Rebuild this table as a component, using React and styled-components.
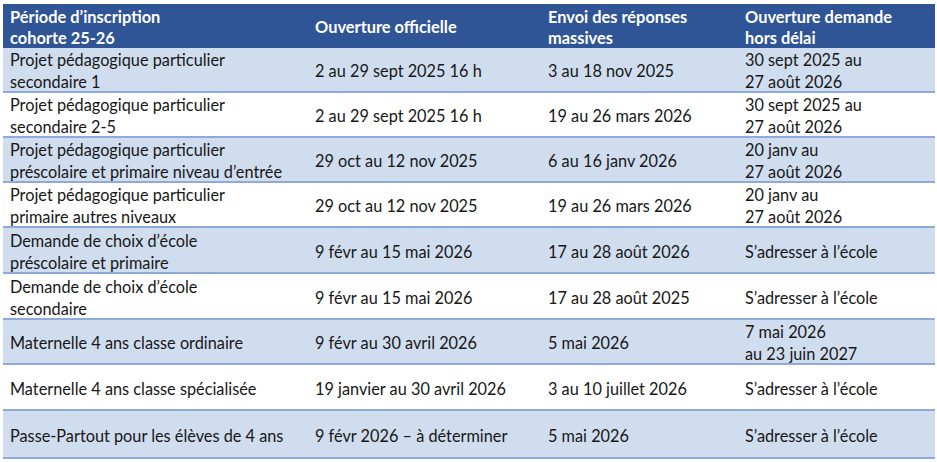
import React from 'react';
import styled, { createGlobalStyle } from 'styled-components';

const GlobalStyle = createGlobalStyle`
  html, body {
    margin: 0;
    padding: 0;
    background: #ffffff;
  }
  body {
    font-family: Lato, 'Liberation Sans', sans-serif;
  }
`;

const Page = styled.div`
  padding: 4px 2px 0 3px;
`;

const Table = styled.div`
  width: 932px;
  display: grid;
  grid-template-columns: 305px 233px 197px 197px;
`;

const HeaderCell = styled.div`
  background: #2f5597;
  color: #ffffff;
  font-weight: 700;
  font-size: 16.4px;
  line-height: 21px;
  height: 44px;
  padding: 1px 6px 0 7px;
  box-sizing: border-box;
  display: flex;
  align-items: center;
`;

const Cell = styled.div`
  background: ${(p) => (p.$shade ? '#d0ddef' : '#ffffff')};
  color: #171717;
  font-size: 16.3px;
  line-height: 22px;
  height: ${(p) => p.$h}px;
  padding: 3px 6px 0 7px;
  box-sizing: border-box;
  border-bottom: 2px solid #8eaadb;
  display: flex;
  align-items: center;
  white-space: pre-line;
`;

const HeaderText = styled.span`
  white-space: pre-line;
`;

const headers = [
  'Période d’inscription\ncohorte 25-26',
  'Ouverture officielle',
  'Envoi des réponses\nmassives',
  'Ouverture demande\nhors délai',
];

const rows = [
  {
    h: 45,
    cells: [
      'Projet pédagogique particulier\nsecondaire 1',
      '2 au 29 sept 2025 16 h',
      '3 au 18 nov 2025',
      '30 sept 2025 au\n27 août 2026',
    ],
  },
  {
    h: 45,
    cells: [
      'Projet pédagogique particulier\nsecondaire 2-5',
      '2 au 29 sept 2025 16 h',
      '19 au 26 mars 2026',
      '30 sept 2025 au\n27 août 2026',
    ],
  },
  {
    h: 45,
    cells: [
      'Projet pédagogique particulier\npréscolaire et primaire niveau d’entrée',
      '29 oct au 12 nov 2025',
      '6 au 16 janv 2026',
      '20 janv au\n27 août 2026',
    ],
  },
  {
    h: 45,
    cells: [
      'Projet pédagogique particulier\nprimaire autres niveaux',
      '29 oct au 12 nov 2025',
      '19 au 26 mars 2026',
      '20 janv au\n27 août 2026',
    ],
  },
  {
    h: 46,
    cells: [
      'Demande de choix d’école\npréscolaire et primaire',
      '9 févr au 15 mai 2026',
      '17 au 28 août 2026',
      'S’adresser à l’école',
    ],
  },
  {
    h: 46,
    cells: [
      'Demande de choix d’école\nsecondaire',
      '9 févr au 15 mai 2026',
      '17 au 28 août 2025',
      'S’adresser à l’école',
    ],
  },
  {
    h: 45,
    cells: [
      'Maternelle 4 ans classe ordinaire',
      '9 févr au 30 avril 2026',
      '5 mai 2026',
      '7 mai 2026\nau 23 juin 2027',
    ],
  },
  {
    h: 46,
    cells: [
      'Maternelle 4 ans classe spécialisée',
      '19 janvier au 30 avril 2026',
      '3 au 10 juillet 2026',
      'S’adresser à l’école',
    ],
  },
  {
    h: 48,
    cells: [
      'Passe-Partout pour les élèves de 4 ans',
      '9 févr 2026 – à déterminer',
      '5 mai 2026',
      'S’adresser à l’école',
    ],
  },
];

export default function App() {
  return (
    <Page>
      <GlobalStyle />
      <Table>
        {headers.map((h) => (
          <HeaderCell key={h}>
            <HeaderText>{h}</HeaderText>
          </HeaderCell>
        ))}
        {rows.map((row, i) =>
          row.cells.map((c, j) => (
            <Cell key={`${i}-${j}`} $shade={i % 2 === 0} $h={row.h}>
              {c}
            </Cell>
          ))
        )}
      </Table>
    </Page>
  );
}
